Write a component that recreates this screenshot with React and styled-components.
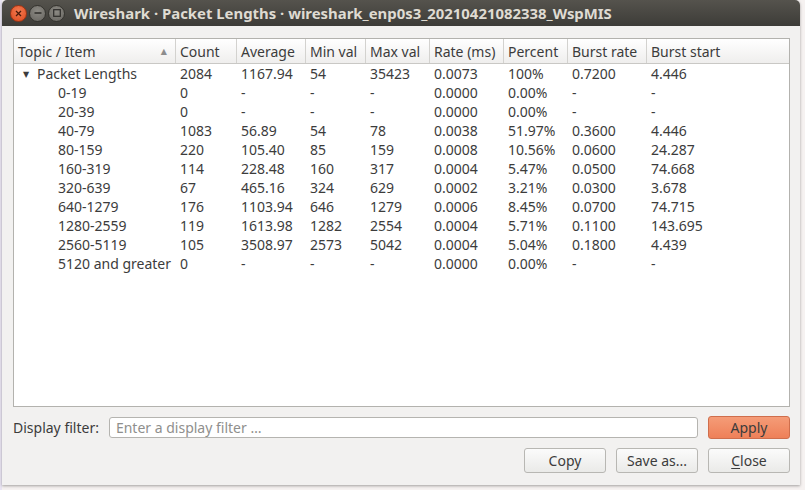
import React from "react"
import styled, { createGlobalStyle } from "styled-components"

const GlobalStyle = createGlobalStyle`
	html, body {
		margin: 0;
		padding: 0;
		background: #f6f2f1;
	}
	body {
		font-family: "Noto Sans", "DejaVu Sans", sans-serif;
	}
`

const Desktop = styled.div`
	width: 805px;
	height: 490px;
	padding: 0 5px 5px 2px;
	box-sizing: border-box;
	background: linear-gradient(to right, #e9e4f2 0px, #e9e4f2 2px, #f6f2f1 2px);
`

const Window = styled.div`
	height: 100%;
	display: flex;
	flex-direction: column;
	background: #f2f1f0;
	border-radius: 5px 5px 0 0;
	overflow: hidden;
	box-shadow: 0 1px 3px rgba(0, 0, 0, 0.35);
`

const TitleBar = styled.div`
	height: 26px;
	flex-shrink: 0;
	display: flex;
	align-items: center;
	padding-left: 8px;
	background: linear-gradient(to bottom, #55534d, #3d3c38);
	color: #dfdbd2;
	font-size: 14.9px;
	font-weight: bold;
	white-space: nowrap;
`

const Controls = styled.div`
	display: flex;
	gap: 2px;
	margin-right: 9px;
`

const Dot = styled.div`
	width: 17px;
	height: 17px;
	border-radius: 50%;
	display: flex;
	align-items: center;
	justify-content: center;
	background: ${(p) =>
		p.close
			? "radial-gradient(circle at 50% 35%, #f37a50, #dc4a1f)"
			: "radial-gradient(circle at 50% 35%, #8c8a84, #66645f)"};
	border: 1px solid ${(p) => (p.close ? "#9e3414" : "#35342f")};
	box-sizing: border-box;
`

const Body = styled.div`
	flex: 1;
	display: flex;
	flex-direction: column;
	padding: 12px 10px 12px 11px;
	min-height: 0;
`

const Table = styled.div`
	flex: 1;
	background: #ffffff;
	border: 1px solid #b3b2ae;
	display: flex;
	flex-direction: column;
	overflow: hidden;
`

const cols = "162px 61px 69px 60px 64px 74px 64px 79px 1fr"

const HeadRow = styled.div`
	display: grid;
	grid-template-columns: ${cols};
	height: 24px;
	background: linear-gradient(to bottom, #ffffff, #efeeed);
	border-bottom: 1px solid #c9c8c5;
`

const HeadCell = styled.div`
	display: flex;
	align-items: center;
	justify-content: space-between;
	padding: 0 8px 0 4px;
	border-right: 1px solid ${(p) => (p.last ? "transparent" : "#d3d2cf")};
	font-size: 14px;
	color: #3c3c3c;
	white-space: nowrap;
	overflow: hidden;
`

const SortArrow = styled.span`
	font-size: 8px;
	color: #8d8d8d;
	margin-top: -2px;
`

const Rows = styled.div`
	padding-top: 0;
`

const Row = styled.div`
	display: grid;
	grid-template-columns: ${cols};
	height: 19px;
	align-items: center;
`

const Cell = styled.div`
	padding-left: ${(p) => p.indent || 4}px;
	font-size: 14px;
	color: #3c3c3c;
	white-space: nowrap;
	overflow: hidden;
	display: flex;
	align-items: center;
`

const Expander = styled.span`
	font-size: 8px;
	color: #3c3c3c;
	width: 14px;
	margin-left: 5px;
`

const FilterRow = styled.div`
	display: flex;
	align-items: center;
	margin-top: 9px;
	gap: 10px;
`

const Label = styled.span`
	font-size: 14px;
	color: #3c3c3c;
	white-space: nowrap;
`

const Input = styled.input`
	flex: 1;
	height: 21px;
	box-sizing: border-box;
	border: 1px solid #b5b4b0;
	border-radius: 3px;
	padding: 0 6px;
	font-family: "Noto Sans", "DejaVu Sans", sans-serif;
	font-size: 14px;
	color: #3c3c3c;
	background: #ffffff;
	&::placeholder {
		color: #8f8f8d;
	}
`

const Button = styled.button`
	width: 82px;
	height: ${(p) => (p.primary ? 23 : 25)}px;
	box-sizing: border-box;
	border-radius: 3px;
	font-family: "Noto Sans", "DejaVu Sans", sans-serif;
	font-size: 14px;
	color: #3c3c3c;
	padding: 0;
	margin-left: 0;
	border: 1px solid ${(p) => (p.primary ? "#cf6e4c" : "#b8b7b3")};
	background: ${(p) =>
		p.primary
			? "linear-gradient(to bottom, #f59c78, #ee8058)"
			: "linear-gradient(to bottom, #fbfbfb, #eaeae8)"};
`

const ButtonRow = styled.div`
	display: flex;
	justify-content: flex-end;
	gap: 10px;
	margin-top: 9px;
`

const Mnemonic = styled.span`
	text-decoration: underline;
	text-underline-offset: 2px;
`

const headers = [
	"Topic / Item",
	"Count",
	"Average",
	"Min val",
	"Max val",
	"Rate (ms)",
	"Percent",
	"Burst rate",
	"Burst start",
]

const data = [
	["0-19", "0", "-", "-", "-", "0.0000", "0.00%", "-", "-"],
	["20-39", "0", "-", "-", "-", "0.0000", "0.00%", "-", "-"],
	["40-79", "1083", "56.89", "54", "78", "0.0038", "51.97%", "0.3600", "4.446"],
	["80-159", "220", "105.40", "85", "159", "0.0008", "10.56%", "0.0600", "24.287"],
	["160-319", "114", "228.48", "160", "317", "0.0004", "5.47%", "0.0500", "74.668"],
	["320-639", "67", "465.16", "324", "629", "0.0002", "3.21%", "0.0300", "3.678"],
	["640-1279", "176", "1103.94", "646", "1279", "0.0006", "8.45%", "0.0700", "74.715"],
	["1280-2559", "119", "1613.98", "1282", "2554", "0.0004", "5.71%", "0.1100", "143.695"],
	["2560-5119", "105", "3508.97", "2573", "5042", "0.0004", "5.04%", "0.1800", "4.439"],
	["5120 and greater", "0", "-", "-", "-", "0.0000", "0.00%", "-", "-"],
]

const total = ["2084", "1167.94", "54", "35423", "0.0073", "100%", "0.7200", "4.446"]

const App = () => {
	return (
		<Desktop>
			<GlobalStyle />
			<Window>
				<TitleBar>
					<Controls>
						<Dot close>
							<svg width="7" height="7" viewBox="0 0 7 7">
								<path d="M1 1L6 6M6 1L1 6" stroke="#4a1a0a" strokeWidth="1.3" />
							</svg>
						</Dot>
						<Dot>
							<svg width="8" height="8" viewBox="0 0 8 8">
								<path d="M0.5 4H7.5" stroke="#2e2d2a" strokeWidth="1.3" />
							</svg>
						</Dot>
						<Dot>
							<svg width="8" height="8" viewBox="0 0 8 8">
								<rect x="0.7" y="0.7" width="6.6" height="6.6" fill="none" stroke="#2e2d2a" strokeWidth="1.2" />
							</svg>
						</Dot>
					</Controls>
					Wireshark · Packet Lengths · wireshark_enp0s3_20210421082338_WspMIS
				</TitleBar>
				<Body>
					<Table>
						<HeadRow>
							{headers.map((h, i) => (
								<HeadCell key={h} last={i === headers.length - 1}>
									{h}
									{i === 0 && <SortArrow>▲</SortArrow>}
								</HeadCell>
							))}
						</HeadRow>
						<Rows>
							<Row>
								<Cell indent={0}>
									<Expander>▼</Expander>
									Packet Lengths
								</Cell>
								{total.map((v, i) => (
									<Cell key={i}>{v}</Cell>
								))}
							</Row>
							{data.map((r) => (
								<Row key={r[0]}>
									{r.map((v, i) => (
										<Cell key={i} indent={i === 0 ? 44 : 4}>
											{v}
										</Cell>
									))}
								</Row>
							))}
						</Rows>
					</Table>
					<FilterRow>
						<Label>Display filter:</Label>
						<Input placeholder="Enter a display filter …" />
						<Button primary>Apply</Button>
					</FilterRow>
					<ButtonRow>
						<Button>Copy</Button>
						<Button>Save as...</Button>
						<Button>
							<Mnemonic>C</Mnemonic>lose
						</Button>
					</ButtonRow>
				</Body>
			</Window>
		</Desktop>
	)
}

export default App
